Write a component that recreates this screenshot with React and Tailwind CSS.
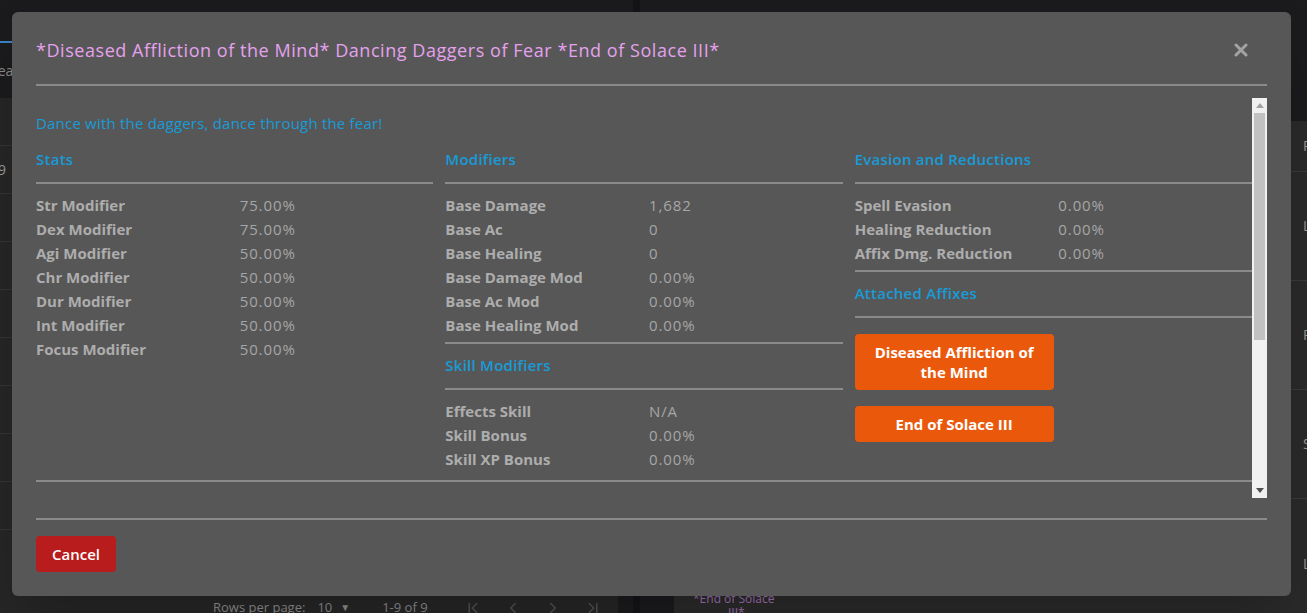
import React from 'react';
import { ChevronFirst, ChevronLeft, ChevronRight, ChevronLast } from 'lucide-react';

const stats = [
  ['Str Modifier', '75.00%'],
  ['Dex Modifier', '75.00%'],
  ['Agi Modifier', '50.00%'],
  ['Chr Modifier', '50.00%'],
  ['Dur Modifier', '50.00%'],
  ['Int Modifier', '50.00%'],
  ['Focus Modifier', '50.00%'],
];

const modifiers = [
  ['Base Damage', '1,682'],
  ['Base Ac', '0'],
  ['Base Healing', '0'],
  ['Base Damage Mod', '0.00%'],
  ['Base Ac Mod', '0.00%'],
  ['Base Healing Mod', '0.00%'],
];

const skillModifiers = [
  ['Effects Skill', 'N/A'],
  ['Skill Bonus', '0.00%'],
  ['Skill XP Bonus', '0.00%'],
];

const evasion = [
  ['Spell Evasion', '0.00%'],
  ['Healing Reduction', '0.00%'],
  ['Affix Dmg. Reduction', '0.00%'],
];

const Rule = ({ className = '' }) => <div className={`h-[2px] bg-[#8a8a8a] ${className}`} />;

const Heading = ({ children }) => (
  <h3 className="text-[15px] leading-5 font-semibold tracking-[0.25px] text-[#179bd7]">{children}</h3>
);

const Rows = ({ items }) => (
  <dl className="grid grid-cols-2 gap-x-2.5 text-[15px] leading-6">
    {items.map(([label, value]) => (
      <React.Fragment key={label}>
        <dt className="font-bold text-[#adadad]">{label}</dt>
        <dd className="text-[#a6a6a6] tracking-[0.9px]">{value}</dd>
      </React.Fragment>
    ))}
  </dl>
);

const Section = ({ title, items, children }) => (
  <div>
    <Heading>{title}</Heading>
    <Rule className="mt-[13px] mb-[9px]" />
    {items && <Rows items={items} />}
    {children}
  </div>
);

const CloseIcon = () => (
  <svg width="14" height="14" viewBox="0 0 14 14" className="text-[#a3a3a3]">
    <path d="M2 2 L12 12 M12 2 L2 12" stroke="currentColor" strokeWidth="3" strokeLinecap="round" />
  </svg>
);

// fake classic scrollbar, the page is photographed without native ones
const Scrollbar = () => (
  <div className="w-[15px] shrink-0 bg-[#f1f1f1] flex flex-col items-center">
    <div className="h-[15px] flex items-center justify-center">
      <svg width="8" height="5" viewBox="0 0 8 5">
        <path d="M4 0 L8 5 L0 5 Z" fill="#a3a3a3" />
      </svg>
    </div>
    <div className="w-[11px] h-[227px] bg-[#c1c1c1]" />
    <div className="mt-auto h-[15px] flex items-center justify-center">
      <svg width="8" height="5" viewBox="0 0 8 5">
        <path d="M0 0 L8 0 L4 5 Z" fill="#505050" />
      </svg>
    </div>
  </div>
);

const BackgroundPage = () => (
  <div className="flex h-[613px] overflow-hidden bg-[#1b1b1d] text-[#9a9a9a] whitespace-nowrap">
    {/* left panel */}
    <div className="w-[618px] shrink-0 flex flex-col">
      <div className="h-[43px] shrink-0 flex items-end">
        <div className="w-[40px] h-[2px] bg-[#3b82c4]" />
      </div>
      <div className="h-[55px] shrink-0 flex items-center text-sm text-[#8a8a8a]">
        <span className="-ml-[10px]">Search</span>
      </div>
      <div className="flex-1 bg-[#262627] flex flex-col">
        {[0, 1, 2, 3, 4, 5, 6, 7, 8].map((i) => (
          <div key={i} className="h-[48px] shrink-0 border-b border-[#333] flex items-center text-sm">
            {i === 1 ? <span className="-ml-[2px]">9</span> : null}
          </div>
        ))}
        <div className="mt-auto h-[16px] shrink-0 flex items-start pl-[213px] text-[13px] leading-5 text-[#8a8a8a]">
          <span>Rows per page:</span>
          <span className="ml-3 flex items-center">
            10 <span className="ml-2 text-[10px]">▼</span>
          </span>
          <span className="ml-8">1-9 of 9</span>
          <div className="ml-9 mt-[2px] flex gap-[22px] text-[#505052]">
            <ChevronFirst size={18} />
            <ChevronLeft size={18} />
            <ChevronRight size={18} />
            <ChevronLast size={18} />
          </div>
        </div>
      </div>
    </div>
    <div className="w-[15px] shrink-0" />
    <div className="w-[7px] shrink-0 bg-[#141416]" />
    <div className="w-[34px] shrink-0" />
    {/* right panel */}
    <div className="flex-1 min-w-0 flex flex-col">
      <div className="h-[121px] shrink-0" />
      <div className="flex-1 bg-[#2a2a2b] flex flex-col text-sm text-[#9a9a9a]">
        <div className="h-[51px] shrink-0 border-b border-[#3a3a3a] flex items-center pl-[629px]">Prefix</div>
        <div className="h-[109px] shrink-0 border-b border-[#3a3a3a] flex items-center pl-[629px]">Legendary</div>
        <div className="h-[109px] shrink-0 border-b border-[#3a3a3a] flex items-center pl-[629px]">Prefix</div>
        <div className="h-[109px] shrink-0 border-b border-[#3a3a3a] flex items-center pl-[629px]">Suffix</div>
        <div className="flex shrink-0">
          <div className="w-[629px] shrink-0 pl-[19px] pt-[93px] text-xs text-[#a070b0] leading-[14px]">
            <div>*End of Solace</div>
            <div className="pl-[35px]">III*</div>
          </div>
          <div className="pt-[55px]">Legendary</div>
        </div>
      </div>
    </div>
  </div>
);

export default function App() {
  return (
    <div className="relative w-[1307px] h-[613px] overflow-hidden" style={{ fontFamily: '"Open Sans", "Noto Sans", sans-serif' }}>
      <BackgroundPage />

      {/* modal overlay */}
      <div className="absolute inset-0 pl-3 pt-3">
        <div className="w-[1279px] h-[584px] bg-[#575757] rounded-md p-6 flex flex-col shadow-2xl">
          <div className="flex items-center justify-between pb-5 border-b-2 border-[#8a8a8a]">
            <h2 className="text-lg leading-7 tracking-[0.55px] text-[#e5a2ee]">
              *Diseased Affliction of the Mind* Dancing Daggers of Fear *End of Solace III*
            </h2>
            <button className="mr-[19px]">
              <CloseIcon />
            </button>
          </div>

          <div className="mt-3 h-[400px] flex">
            <div className="flex-1 overflow-hidden">
              <p className="pt-[15px] text-[15px] leading-5 tracking-[0.2px] text-[#179bd7]">
                Dance with the daggers, dance through the fear!
              </p>

              <div className="mt-4 grid grid-cols-3 gap-3">
                <Section title="Stats" items={stats} />

                <div>
                  <Section title="Modifiers" items={modifiers} />
                  <Rule className="mt-[5px] mb-[11px]" />
                  <Section title="Skill Modifiers" items={skillModifiers} />
                </div>

                <div>
                  <Section title="Evasion and Reductions" items={evasion} />
                  <Rule className="mt-[5px] mb-[11px]" />
                  <Section title="Attached Affixes">
                    <div className="flex flex-col gap-4 mt-4 w-[199px]">
                      <button className="bg-[#ea580c] text-white font-bold text-[15px] leading-5 px-4 py-2 rounded-sm">
                        Diseased Affliction of the Mind
                      </button>
                      <button className="bg-[#ea580c] text-white font-bold text-[15px] leading-5 px-4 py-2 rounded-sm">
                        End of Solace III
                      </button>
                    </div>
                  </Section>
                </div>
              </div>

              <Rule className="mt-[9px]" />
            </div>
            <Scrollbar />
          </div>

          <div className="mt-5 pt-4 border-t-2 border-[#8a8a8a]">
            <button className="bg-[#b91c1c] text-white text-[15px] font-semibold leading-5 px-4 py-2 rounded-sm">
              Cancel
            </button>
          </div>
        </div>
      </div>
    </div>
  );
}
